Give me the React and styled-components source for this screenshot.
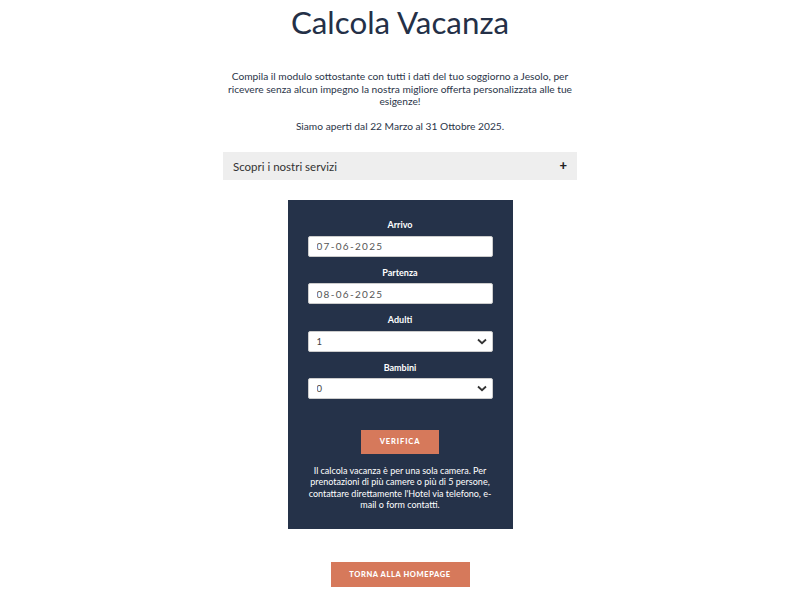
import React, { useState } from "react";
import styled, { createGlobalStyle } from "styled-components";

const GlobalStyle = createGlobalStyle`
  body {
    margin: 0;
    background: #fff;
    font-family: Lato, "Open Sans", sans-serif;
    color: #2b3549;
  }
`;

const Page = styled.div`
  display: flex;
  flex-direction: column;
  align-items: center;
  padding-bottom: 14px;
`;

const Title = styled.h1`
  margin: 0;
  font-size: 31.3px;
  font-weight: 400;
  line-height: 44px;
  color: #243047;
`;

const Intro = styled.p`
  margin: ${(p) => p.$top}px 0 0;
  max-width: 352px;
  text-align: center;
  font-size: 10.2px;
  line-height: 12.5px;
  color: #2b3549;
`;

const Accordion = styled.button`
  margin-top: 20px;
  width: 354px;
  height: 28px;
  display: flex;
  align-items: center;
  justify-content: space-between;
  padding: 0 10px 0 10px;
  border: none;
  background: #eeeeee;
  font-family: Lato, sans-serif;
  font-size: 11.5px;
  color: #333;
  cursor: pointer;
`;

const Plus = styled.span`
  font-size: 13px;
  font-weight: 900;
  color: #222;
  line-height: 1;
  margin-top: -2px;
`;

const FormPanel = styled.form`
  margin-top: 20px;
  width: 225px;
  box-sizing: border-box;
  background: #253249;
  padding: 19px 20px 18px;
  display: flex;
  flex-direction: column;
  align-items: center;
`;

const Field = styled.div`
  width: 100%;
  display: flex;
  flex-direction: column;
  align-items: center;
  margin-bottom: 10px;
`;

const Label = styled.label`
  font-size: 9px;
  font-weight: 700;
  color: #fff;
  line-height: 12px;
  margin-bottom: 4.5px;
`;

const TextInput = styled.input`
  display: block;
  width: 100%;
  height: 21px;
  box-sizing: border-box;
  border: 1px solid #ccc;
  border-radius: 2px;
  padding: 0 8px;
  font-family: Lato, sans-serif;
  font-size: 10px;
  letter-spacing: 1.3px;
  color: #555;
  background: #fff;
`;

const SelectWrap = styled.div`
  position: relative;
  width: 100%;
  height: 21px;
`;

const Select = styled.select`
  display: block;
  width: 100%;
  height: 21px;
  box-sizing: border-box;
  border: 1px solid #ccc;
  border-radius: 2px;
  padding: 0 8px;
  font-family: Lato, sans-serif;
  font-size: 9.5px;
  color: #444;
  background: #fff;
  appearance: none;
`;

const Chevron = styled.svg`
  position: absolute;
  right: 6px;
  top: 7px;
  pointer-events: none;
`;

const OrangeButton = styled.button`
  width: ${(p) => p.$w}px;
  height: ${(p) => p.$h}px;
  background: #d6795b;
  border: none;
  color: #fff;
  font-family: Lato, sans-serif;
  font-weight: 900;
  font-size: 7.5px;
  letter-spacing: ${(p) => p.$ls}px;
  text-transform: uppercase;
  cursor: pointer;
`;

const SubmitRow = styled.div`
  margin-top: 19px;
`;

const Note = styled.p`
  margin: 11px 0 0;
  width: 185px;
  font-size: 9px;
  line-height: 11.5px;
  color: #fff;
  text-align: center;
`;

const BackRow = styled.div`
  margin-top: 32px;
`;

const ArrowDown = () => (
  <Chevron width="10" height="7" viewBox="0 0 10 7">
    <path d="M1 1.5 L5 5.2 L9 1.5" fill="none" stroke="#333" strokeWidth="1.8" />
  </Chevron>
);

export default function App() {
  const [form, setForm] = useState({
    arrivo: "07-06-2025",
    partenza: "08-06-2025",
    adulti: "1",
    bambini: "0",
  });

  const handleChange = (e) => {
    const { name, value } = e.target;
    setForm({ ...form, [name]: value });
  };

  return (
    <Page>
      <GlobalStyle />
      <Title>Calcola Vacanza</Title>
      <Intro $top={26}>
        Compila il modulo sottostante con tutti i dati del tuo soggiorno a Jesolo, per
        ricevere senza alcun impegno la nostra migliore offerta personalizzata alle tue
        esigenze!
      </Intro>
      <Intro $top={12}>Siamo aperti dal 22 Marzo al 31 Ottobre 2025.</Intro>

      <Accordion type="button">
        <span>Scopri i nostri servizi</span>
        <Plus>+</Plus>
      </Accordion>

      <FormPanel onSubmit={(e) => e.preventDefault()}>
        <Field>
          <Label>Arrivo</Label>
          <TextInput name="arrivo" value={form.arrivo} onChange={handleChange} />
        </Field>
        <Field>
          <Label>Partenza</Label>
          <TextInput name="partenza" value={form.partenza} onChange={handleChange} />
        </Field>
        <Field>
          <Label>Adulti</Label>
          <SelectWrap>
            <Select name="adulti" value={form.adulti} onChange={handleChange}>
              {[1, 2, 3, 4, 5].map((n) => (
                <option key={n} value={n}>{n}</option>
              ))}
            </Select>
            <ArrowDown />
          </SelectWrap>
        </Field>
        <Field>
          <Label>Bambini</Label>
          <SelectWrap>
            <Select name="bambini" value={form.bambini} onChange={handleChange}>
              {[0, 1, 2, 3, 4].map((n) => (
                <option key={n} value={n}>{n}</option>
              ))}
            </Select>
            <ArrowDown />
          </SelectWrap>
        </Field>
        <SubmitRow>
          <OrangeButton type="submit" $w={78} $h={24} $ls={0.9}>Verifica</OrangeButton>
        </SubmitRow>
        <Note>
          Il calcola vacanza è per una sola camera. Per prenotazioni di più camere o più di 5
          persone, contattare direttamente l'Hotel via telefono, e-mail o form contatti.
        </Note>
      </FormPanel>

      <BackRow>
        <OrangeButton type="button" $w={139} $h={25} $ls={0.6}>Torna alla homepage</OrangeButton>
      </BackRow>
    </Page>
  );
}
